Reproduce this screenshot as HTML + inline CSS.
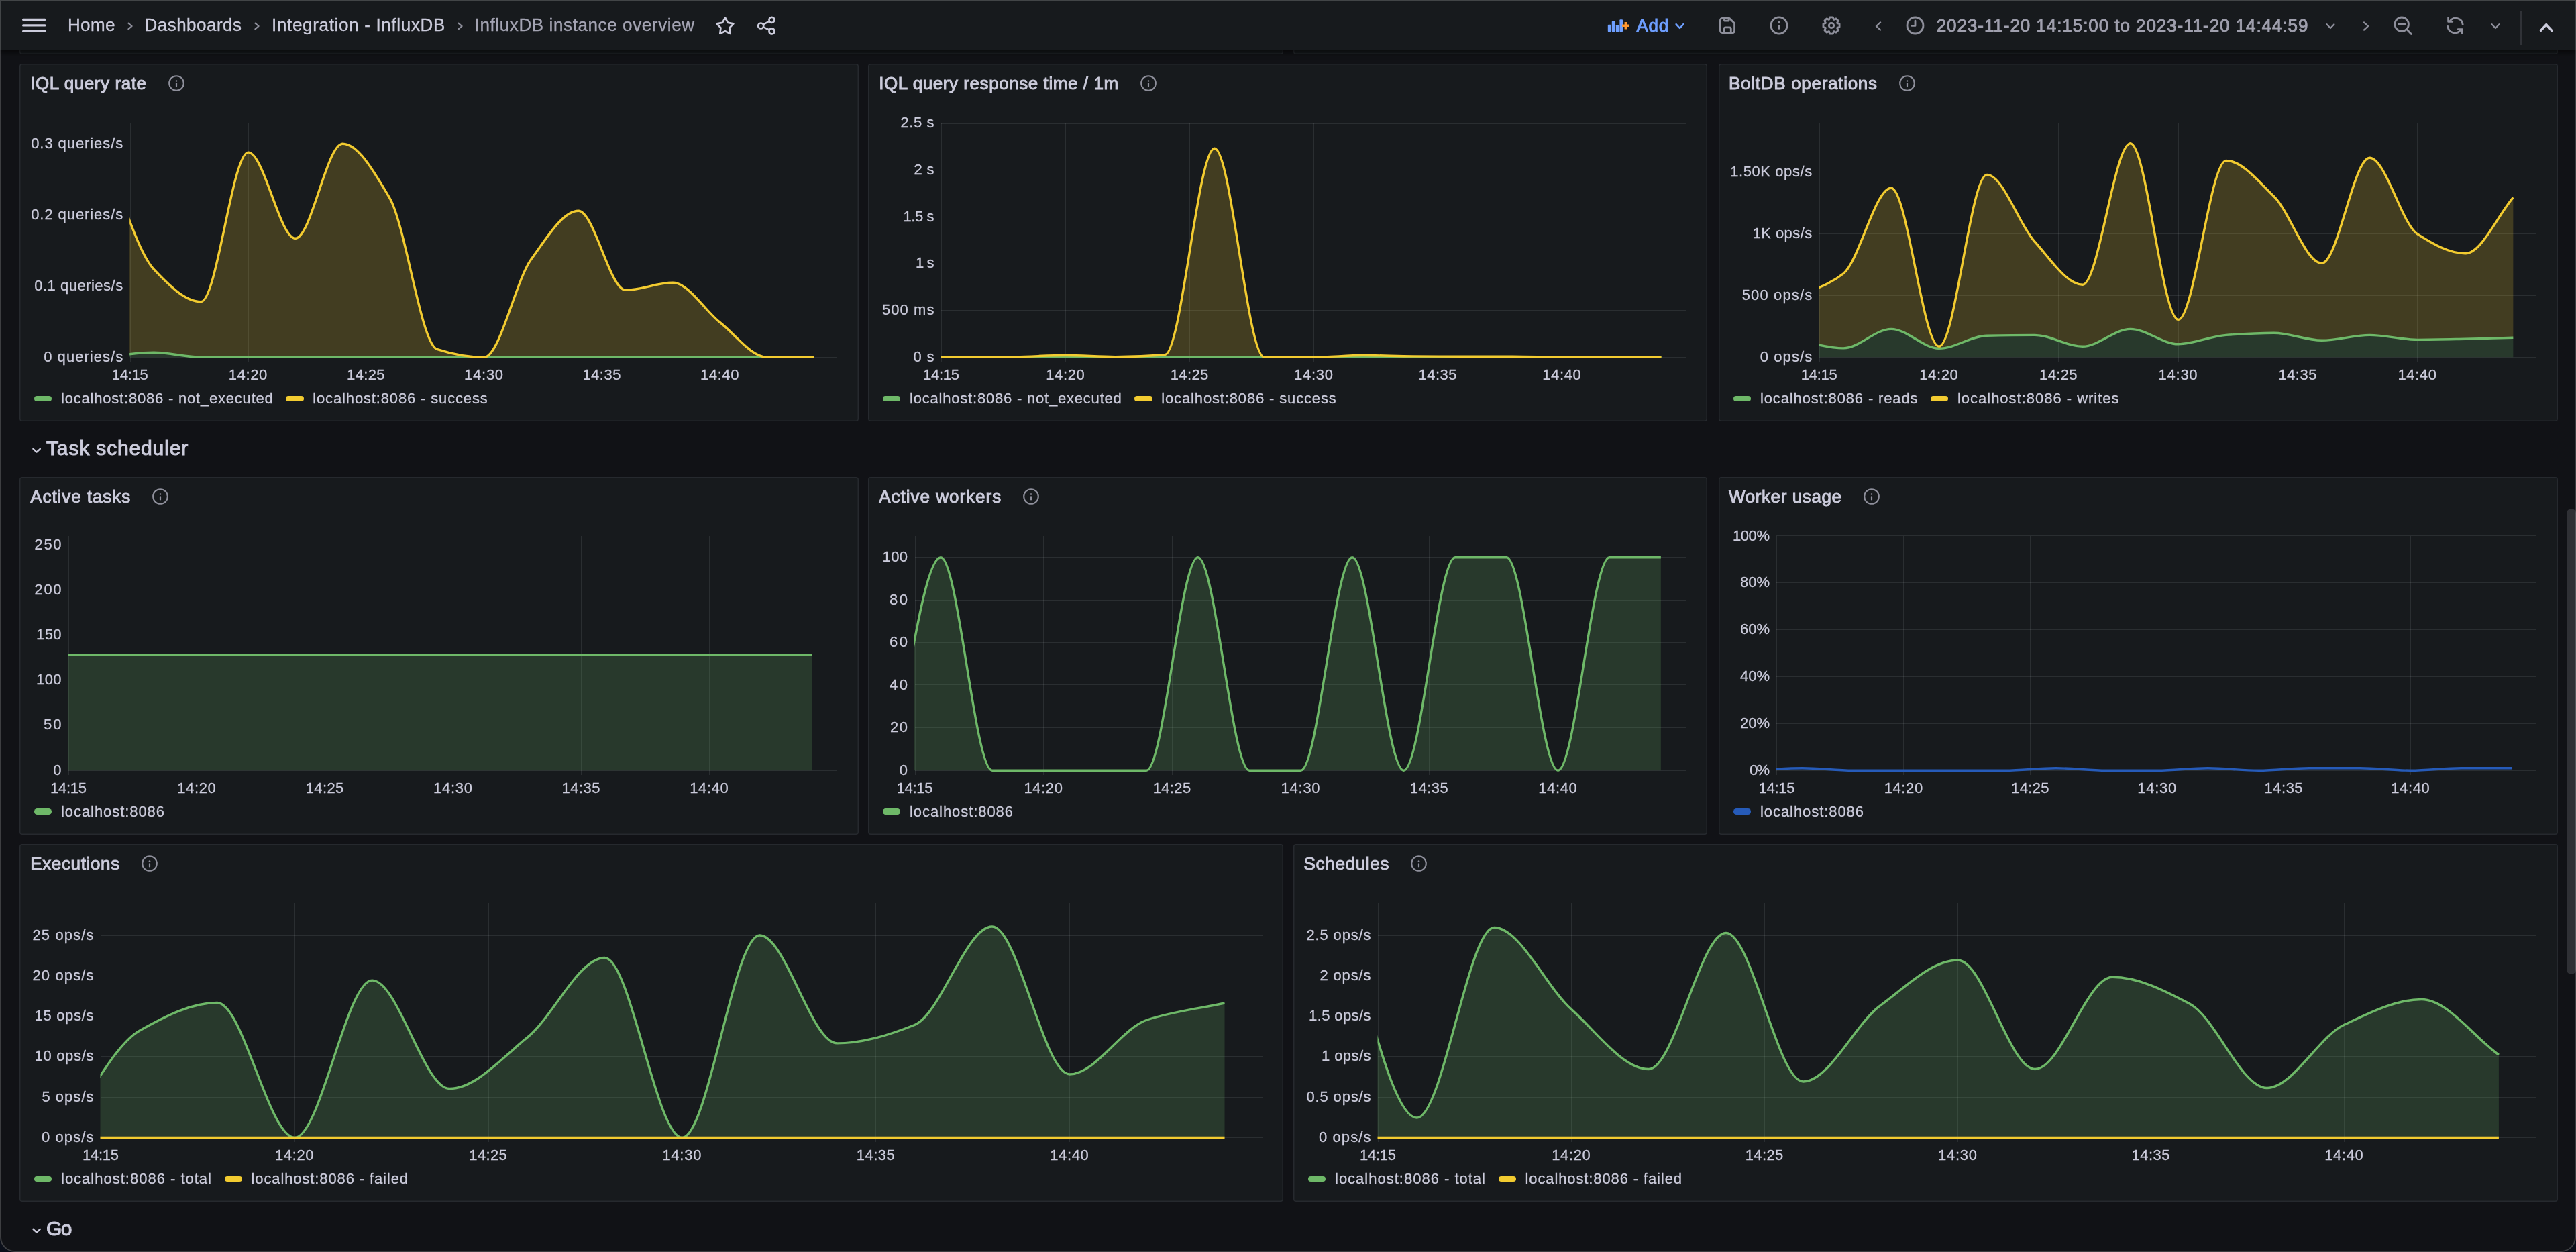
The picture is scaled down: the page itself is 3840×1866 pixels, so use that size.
<!DOCTYPE html><html><head><meta charset='utf-8'><title>InfluxDB instance overview - Dashboards - Grafana</title><style>
*{box-sizing:border-box}
html,body{margin:0;padding:0;background:#111216;}
body{width:3840px;height:1866px;overflow:hidden;position:relative;font-family:'Liberation Sans', sans-serif;color:#ccccdc}
.panel{position:absolute;background:#171a1d;box-shadow:inset 0 0 0 1.5px #26292e;border-radius:4px;overflow:hidden}
.panel>*{position:absolute}
.chart{left:0;top:0}
.ptitle{font-size:26px;line-height:32px;white-space:pre;color:#ccccdc;-webkit-text-stroke:0.95px #ccccdc}
.ic{position:absolute}
.tk{font-family:'Liberation Sans', sans-serif;font-size:22px;fill:#ccccdc;stroke:#ccccdc;stroke-width:0.3px}
.tx{letter-spacing:-0.4px}
.lgm{width:26.3px;height:8.6px;border-radius:4.3px}
.lgt{font-size:22px;line-height:26px;white-space:pre;color:#ccccdc;-webkit-text-stroke:0.3px #ccccdc}
.row{position:absolute;font-size:30px;line-height:36px;white-space:pre;color:#ccccdc;-webkit-text-stroke:1.05px #ccccdc}
.abs{position:absolute}
#root{position:absolute;left:0;top:0;width:3840px;height:1866px;overflow:hidden;will-change:transform}
</style></head><body><div id='root'>
<div class="panel" style="left:29px;top:20px;width:1884px;height:60.6px"></div>
<div class="panel" style="left:1928px;top:20px;width:1885px;height:60.6px"></div>
<div class="panel" style="left:29px;top:95.2px;width:1251px;height:532.8px">
<div class="ptitle" style="left:16.2px;top:12.8px;letter-spacing:0.582px">IQL query rate</div>
<svg class="ic" style="left:220.6px;top:16.3px" width="26" height="26" viewBox="0 0 26 26"><circle cx="13" cy="13" r="10.8" fill="none" stroke="#8e8f9b" stroke-width="2.1"/><circle cx="13" cy="9.5" r="1.35" fill="#8e8f9b"/><rect x="11.9" y="12.3" width="2.2" height="6.2" rx="1.1" fill="#8e8f9b"/></svg>
<svg class="chart" width="1251" height="532.8" viewBox="0 0 1251 532.8"><defs><clipPath id="cp0"><rect x="164.2" y="84.3" width="1057.3" height="355.5"/></clipPath></defs><path d="M165.50,88.3V443.8M341.50,88.3V443.8M516.50,88.3V443.8M692.50,88.3V443.8M868.50,88.3V443.8M1044.50,88.3V443.8M165.0,119.30H1219.5M165.0,225.30H1219.5M165.0,331.30H1219.5M165.0,437.30H1219.5" stroke="rgba(240,250,255,0.09)" stroke-width="1" fill="none" shape-rendering="crispEdges"/><g clip-path="url(#cp0)"><path d="M130.04,436.24C153.48,434.26 176.92,430.30 200.36,430.30C223.80,430.30 247.24,437.30 270.68,437.30C294.12,437.30 317.56,437.30 341.00,437.30C364.44,437.30 387.88,437.30 411.32,437.30C434.76,437.30 458.20,437.30 481.64,437.30C505.08,437.30 528.52,437.30 551.96,437.30C575.40,437.30 598.84,437.30 622.28,437.30C645.72,437.30 669.16,437.30 692.60,437.30C716.04,437.30 739.48,437.30 762.92,437.30C786.36,437.30 809.80,437.30 833.24,437.30C856.68,437.30 880.12,437.30 903.56,437.30C927.00,437.30 950.44,437.30 973.88,437.30C997.32,437.30 1020.76,437.30 1044.20,437.30C1067.64,437.30 1091.08,437.30 1114.52,437.30C1137.96,437.30 1161.40,437.30 1184.84,437.30L1184.84,437.30L130.04,437.30Z" fill="#6eb868" fill-opacity="0.2"/><path d="M130.04,145.80C153.48,199.33 176.92,281.66 200.36,306.39C223.80,331.12 247.24,354.62 270.68,354.62C294.12,354.62 317.56,132.13 341.00,132.13C364.44,132.13 387.88,260.28 411.32,260.28C434.76,260.28 458.20,119.30 481.64,119.30C505.08,119.30 528.52,160.58 551.96,200.28C575.40,239.99 598.84,417.74 622.28,425.32C645.72,432.90 669.16,437.30 692.60,437.30C716.04,437.30 739.48,323.51 762.92,291.34C786.36,259.17 809.80,219.26 833.24,219.26C856.68,219.26 880.12,337.34 903.56,337.34C927.00,337.34 950.44,326.32 973.88,326.32C997.32,326.32 1020.76,366.94 1044.20,385.36C1067.64,403.78 1091.08,437.30 1114.52,437.30C1137.96,437.30 1161.40,437.30 1184.84,437.30L1184.84,437.30C1161.40,437.30 1137.96,437.30 1114.52,437.30C1091.08,437.30 1067.64,437.30 1044.20,437.30C1020.76,437.30 997.32,437.30 973.88,437.30C950.44,437.30 927.00,437.30 903.56,437.30C880.12,437.30 856.68,437.30 833.24,437.30C809.80,437.30 786.36,437.30 762.92,437.30C739.48,437.30 716.04,437.30 692.60,437.30C669.16,437.30 645.72,437.30 622.28,437.30C598.84,437.30 575.40,437.30 551.96,437.30C528.52,437.30 505.08,437.30 481.64,437.30C458.20,437.30 434.76,437.30 411.32,437.30C387.88,437.30 364.44,437.30 341.00,437.30C317.56,437.30 294.12,437.30 270.68,437.30C247.24,437.30 223.80,430.30 200.36,430.30C176.92,430.30 153.48,434.26 130.04,436.24Z" fill="#f2cb30" fill-opacity="0.2"/><path d="M130.04,436.24C153.48,434.26 176.92,430.30 200.36,430.30C223.80,430.30 247.24,437.30 270.68,437.30C294.12,437.30 317.56,437.30 341.00,437.30C364.44,437.30 387.88,437.30 411.32,437.30C434.76,437.30 458.20,437.30 481.64,437.30C505.08,437.30 528.52,437.30 551.96,437.30C575.40,437.30 598.84,437.30 622.28,437.30C645.72,437.30 669.16,437.30 692.60,437.30C716.04,437.30 739.48,437.30 762.92,437.30C786.36,437.30 809.80,437.30 833.24,437.30C856.68,437.30 880.12,437.30 903.56,437.30C927.00,437.30 950.44,437.30 973.88,437.30C997.32,437.30 1020.76,437.30 1044.20,437.30C1067.64,437.30 1091.08,437.30 1114.52,437.30C1137.96,437.30 1161.40,437.30 1184.84,437.30" fill="none" stroke="#6eb868" stroke-width="3.4" stroke-linejoin="round"/><path d="M130.04,145.80C153.48,199.33 176.92,281.66 200.36,306.39C223.80,331.12 247.24,354.62 270.68,354.62C294.12,354.62 317.56,132.13 341.00,132.13C364.44,132.13 387.88,260.28 411.32,260.28C434.76,260.28 458.20,119.30 481.64,119.30C505.08,119.30 528.52,160.58 551.96,200.28C575.40,239.99 598.84,417.74 622.28,425.32C645.72,432.90 669.16,437.30 692.60,437.30C716.04,437.30 739.48,323.51 762.92,291.34C786.36,259.17 809.80,219.26 833.24,219.26C856.68,219.26 880.12,337.34 903.56,337.34C927.00,337.34 950.44,326.32 973.88,326.32C997.32,326.32 1020.76,366.94 1044.20,385.36C1067.64,403.78 1091.08,437.30 1114.52,437.30C1137.96,437.30 1161.40,437.30 1184.84,437.30" fill="none" stroke="#f2cb30" stroke-width="3.4" stroke-linejoin="round"/></g><text class="tk" x="154.2" y="125.7" text-anchor="end" textLength="137" lengthAdjust="spacing">0.3 queries/s</text><text class="tk" x="154.2" y="231.7" text-anchor="end" textLength="137" lengthAdjust="spacing">0.2 queries/s</text><text class="tk" x="154.2" y="337.7" text-anchor="end" textLength="132" lengthAdjust="spacing">0.1 queries/s</text><text class="tk" x="154.2" y="443.7" text-anchor="end" textLength="118" lengthAdjust="spacing">0 queries/s</text><text class="tk" x="164.7" y="471.3" text-anchor="middle" textLength="54" lengthAdjust="spacing">14:15</text><text class="tk" x="340.5" y="471.3" text-anchor="middle" textLength="57.5" lengthAdjust="spacing">14:20</text><text class="tk" x="516.3" y="471.3" text-anchor="middle" textLength="56.5" lengthAdjust="spacing">14:25</text><text class="tk" x="692.1" y="471.3" text-anchor="middle" textLength="58" lengthAdjust="spacing">14:30</text><text class="tk" x="867.9" y="471.3" text-anchor="middle" textLength="57" lengthAdjust="spacing">14:35</text><text class="tk" x="1043.7" y="471.3" text-anchor="middle" textLength="57.5" lengthAdjust="spacing">14:40</text></svg>
<div class="lgm" style="left:22px;top:494.6px;background:#6eb868"></div>
<div class="lgt" style="left:62px;top:485.9px;letter-spacing:0.795px">localhost:8086 - not_executed</div>
<div class="lgm" style="left:397.3px;top:494.6px;background:#f2cb30"></div>
<div class="lgt" style="left:437.3px;top:485.9px;letter-spacing:0.852px">localhost:8086 - success</div>
</div>
<div class="panel" style="left:1294px;top:95.2px;width:1251.3000000000002px;height:532.8px">
<div class="ptitle" style="left:16.2px;top:12.8px;letter-spacing:0.569px">IQL query response time / 1m</div>
<svg class="ic" style="left:404.7px;top:16.3px" width="26" height="26" viewBox="0 0 26 26"><circle cx="13" cy="13" r="10.8" fill="none" stroke="#8e8f9b" stroke-width="2.1"/><circle cx="13" cy="9.5" r="1.35" fill="#8e8f9b"/><rect x="11.9" y="12.3" width="2.2" height="6.2" rx="1.1" fill="#8e8f9b"/></svg>
<svg class="chart" width="1251.3000000000002" height="532.8" viewBox="0 0 1251.3000000000002 532.8"><defs><clipPath id="cp1"><rect x="108.5" y="84.3" width="1113.0" height="355.5"/></clipPath></defs><path d="M109.50,88.3V443.8M294.50,88.3V443.8M479.50,88.3V443.8M664.50,88.3V443.8M849.50,88.3V443.8M1034.50,88.3V443.8M109.0,89.30H1219.5M109.0,158.30H1219.5M109.0,228.30H1219.5M109.0,298.30H1219.5M109.0,367.30H1219.5M109.0,437.30H1219.5" stroke="rgba(240,250,255,0.09)" stroke-width="1" fill="none" shape-rendering="crispEdges"/><g clip-path="url(#cp1)"><path d="M72.50,437.30C97.17,437.30 121.83,437.30 146.50,437.30C171.17,437.30 195.83,437.30 220.50,437.30C245.17,437.30 269.83,437.30 294.50,437.30C319.17,437.30 343.83,437.30 368.50,437.30C393.17,437.30 417.83,437.30 442.50,437.30C467.17,437.30 491.83,437.30 516.50,437.30C541.17,437.30 565.83,437.30 590.50,437.30C615.17,437.30 639.83,437.30 664.50,437.30C689.17,437.30 713.83,437.30 738.50,437.30C763.17,437.30 787.83,437.30 812.50,437.30C837.17,437.30 861.83,437.30 886.50,437.30C911.17,437.30 935.83,437.30 960.50,437.30C985.17,437.30 1009.83,437.30 1034.50,437.30C1059.17,437.30 1083.83,437.30 1108.50,437.30C1133.17,437.30 1157.83,437.30 1182.50,437.30L1182.50,437.30L72.50,437.30Z" fill="#6eb868" fill-opacity="0.2"/><path d="M72.50,437.30C97.17,437.30 121.83,437.30 146.50,437.30C171.17,437.30 195.83,436.95 220.50,436.60C245.17,436.25 269.83,434.51 294.50,434.51C319.17,434.51 343.83,436.60 368.50,436.60C393.17,436.60 417.83,435.66 442.50,433.81C467.17,431.97 491.83,126.30 516.50,126.30C541.17,126.30 565.83,437.30 590.50,437.30C615.17,437.30 639.83,437.30 664.50,437.30C689.17,437.30 713.83,434.51 738.50,434.51C763.17,434.51 787.83,435.75 812.50,435.91C837.17,436.06 861.83,436.18 886.50,436.18C911.17,436.18 935.83,436.18 960.50,436.18C985.17,436.18 1009.83,437.30 1034.50,437.30C1059.17,437.30 1083.83,437.30 1108.50,437.30C1133.17,437.30 1157.83,437.30 1182.50,437.30L1182.50,437.30C1157.83,437.30 1133.17,437.30 1108.50,437.30C1083.83,437.30 1059.17,437.30 1034.50,437.30C1009.83,437.30 985.17,437.30 960.50,437.30C935.83,437.30 911.17,437.30 886.50,437.30C861.83,437.30 837.17,437.30 812.50,437.30C787.83,437.30 763.17,437.30 738.50,437.30C713.83,437.30 689.17,437.30 664.50,437.30C639.83,437.30 615.17,437.30 590.50,437.30C565.83,437.30 541.17,437.30 516.50,437.30C491.83,437.30 467.17,437.30 442.50,437.30C417.83,437.30 393.17,437.30 368.50,437.30C343.83,437.30 319.17,437.30 294.50,437.30C269.83,437.30 245.17,437.30 220.50,437.30C195.83,437.30 171.17,437.30 146.50,437.30C121.83,437.30 97.17,437.30 72.50,437.30Z" fill="#f2cb30" fill-opacity="0.2"/><path d="M72.50,437.30C97.17,437.30 121.83,437.30 146.50,437.30C171.17,437.30 195.83,437.30 220.50,437.30C245.17,437.30 269.83,437.30 294.50,437.30C319.17,437.30 343.83,437.30 368.50,437.30C393.17,437.30 417.83,437.30 442.50,437.30C467.17,437.30 491.83,437.30 516.50,437.30C541.17,437.30 565.83,437.30 590.50,437.30C615.17,437.30 639.83,437.30 664.50,437.30C689.17,437.30 713.83,437.30 738.50,437.30C763.17,437.30 787.83,437.30 812.50,437.30C837.17,437.30 861.83,437.30 886.50,437.30C911.17,437.30 935.83,437.30 960.50,437.30C985.17,437.30 1009.83,437.30 1034.50,437.30C1059.17,437.30 1083.83,437.30 1108.50,437.30C1133.17,437.30 1157.83,437.30 1182.50,437.30" fill="none" stroke="#6eb868" stroke-width="3.4" stroke-linejoin="round"/><path d="M72.50,437.30C97.17,437.30 121.83,437.30 146.50,437.30C171.17,437.30 195.83,436.95 220.50,436.60C245.17,436.25 269.83,434.51 294.50,434.51C319.17,434.51 343.83,436.60 368.50,436.60C393.17,436.60 417.83,435.66 442.50,433.81C467.17,431.97 491.83,126.30 516.50,126.30C541.17,126.30 565.83,437.30 590.50,437.30C615.17,437.30 639.83,437.30 664.50,437.30C689.17,437.30 713.83,434.51 738.50,434.51C763.17,434.51 787.83,435.75 812.50,435.91C837.17,436.06 861.83,436.18 886.50,436.18C911.17,436.18 935.83,436.18 960.50,436.18C985.17,436.18 1009.83,437.30 1034.50,437.30C1059.17,437.30 1083.83,437.30 1108.50,437.30C1133.17,437.30 1157.83,437.30 1182.50,437.30" fill="none" stroke="#f2cb30" stroke-width="3.4" stroke-linejoin="round"/></g><text class="tk" x="98.5" y="95.2" text-anchor="end" textLength="50" lengthAdjust="spacing">2.5 s</text><text class="tk" x="98.5" y="164.9" text-anchor="end" textLength="30" lengthAdjust="spacing">2 s</text><text class="tk" x="98.5" y="234.6" text-anchor="end" textLength="46" lengthAdjust="spacing">1.5 s</text><text class="tk" x="98.5" y="304.3" text-anchor="end" textLength="27.5" lengthAdjust="spacing">1 s</text><text class="tk" x="98.5" y="374.0" text-anchor="end" textLength="77.5" lengthAdjust="spacing">500 ms</text><text class="tk" x="98.5" y="443.7" text-anchor="end" textLength="31" lengthAdjust="spacing">0 s</text><text class="tk" x="109.0" y="471.3" text-anchor="middle" textLength="54" lengthAdjust="spacing">14:15</text><text class="tk" x="294.0" y="471.3" text-anchor="middle" textLength="57.5" lengthAdjust="spacing">14:20</text><text class="tk" x="479.0" y="471.3" text-anchor="middle" textLength="56.5" lengthAdjust="spacing">14:25</text><text class="tk" x="664.0" y="471.3" text-anchor="middle" textLength="58" lengthAdjust="spacing">14:30</text><text class="tk" x="849.0" y="471.3" text-anchor="middle" textLength="57" lengthAdjust="spacing">14:35</text><text class="tk" x="1034.0" y="471.3" text-anchor="middle" textLength="57.5" lengthAdjust="spacing">14:40</text></svg>
<div class="lgm" style="left:22px;top:494.6px;background:#6eb868"></div>
<div class="lgt" style="left:62px;top:485.9px;letter-spacing:0.795px">localhost:8086 - not_executed</div>
<div class="lgm" style="left:397.3px;top:494.6px;background:#f2cb30"></div>
<div class="lgt" style="left:437.3px;top:485.9px;letter-spacing:0.852px">localhost:8086 - success</div>
</div>
<div class="panel" style="left:2562px;top:95.2px;width:1251px;height:532.8px">
<div class="ptitle" style="left:15.0px;top:12.8px;letter-spacing:0.715px">BoltDB operations</div>
<svg class="ic" style="left:267.6px;top:16.3px" width="26" height="26" viewBox="0 0 26 26"><circle cx="13" cy="13" r="10.8" fill="none" stroke="#8e8f9b" stroke-width="2.1"/><circle cx="13" cy="9.5" r="1.35" fill="#8e8f9b"/><rect x="11.9" y="12.3" width="2.2" height="6.2" rx="1.1" fill="#8e8f9b"/></svg>
<svg class="chart" width="1251" height="532.8" viewBox="0 0 1251 532.8"><defs><clipPath id="cp2"><rect x="149.2" y="84.3" width="1071.8" height="355.5"/></clipPath></defs><path d="M150.50,88.3V443.8M328.50,88.3V443.8M506.50,88.3V443.8M685.50,88.3V443.8M863.50,88.3V443.8M1041.50,88.3V443.8M150.0,161.30H1219.0M150.0,253.30H1219.0M150.0,345.30H1219.0M150.0,437.30H1219.0" stroke="rgba(240,250,255,0.09)" stroke-width="1" fill="none" shape-rendering="crispEdges"/><g clip-path="url(#cp2)"><path d="M114.54,411.54C138.31,415.65 162.09,423.87 185.86,423.87C209.63,423.87 233.41,395.35 257.18,395.35C280.95,395.35 304.73,424.24 328.50,424.24C352.27,424.24 376.05,405.87 399.82,405.28C423.59,404.70 447.37,404.36 471.14,404.36C494.91,404.36 518.69,421.29 542.46,421.29C566.23,421.29 590.01,395.35 613.78,395.35C637.55,395.35 661.33,417.80 685.10,417.80C708.87,417.80 732.65,406.06 756.42,404.36C780.19,402.67 803.97,401.24 827.74,401.24C851.51,401.24 875.29,412.28 899.06,412.28C922.83,412.28 946.61,404.36 970.38,404.36C994.15,404.36 1017.93,411.36 1041.70,411.36C1065.47,411.36 1089.25,410.73 1113.02,410.25C1136.79,409.78 1160.57,408.90 1184.34,408.23L1184.34,437.30L114.54,437.30Z" fill="#6eb868" fill-opacity="0.2"/><path d="M114.54,348.98C138.31,336.90 162.09,331.55 185.86,312.73C209.63,293.92 233.41,185.22 257.18,185.22C280.95,185.22 304.73,421.29 328.50,421.29C352.27,421.29 376.05,165.35 399.82,165.35C423.59,165.35 447.37,239.24 471.14,265.26C494.91,291.28 518.69,329.29 542.46,329.29C566.23,329.29 590.01,118.80 613.78,118.80C637.55,118.80 661.33,381.36 685.10,381.36C708.87,381.36 732.65,144.37 756.42,144.37C780.19,144.37 803.97,174.57 827.74,197.73C851.51,220.89 875.29,297.28 899.06,297.28C922.83,297.28 946.61,140.32 970.38,140.32C994.15,140.32 1017.93,238.50 1041.70,253.85C1065.47,269.20 1089.25,282.74 1113.02,282.74C1136.79,282.74 1160.57,227.17 1184.34,199.39L1184.34,408.23C1160.57,408.90 1136.79,409.78 1113.02,410.25C1089.25,410.73 1065.47,411.36 1041.70,411.36C1017.93,411.36 994.15,404.36 970.38,404.36C946.61,404.36 922.83,412.28 899.06,412.28C875.29,412.28 851.51,401.24 827.74,401.24C803.97,401.24 780.19,402.67 756.42,404.36C732.65,406.06 708.87,417.80 685.10,417.80C661.33,417.80 637.55,395.35 613.78,395.35C590.01,395.35 566.23,421.29 542.46,421.29C518.69,421.29 494.91,404.36 471.14,404.36C447.37,404.36 423.59,404.70 399.82,405.28C376.05,405.87 352.27,424.24 328.50,424.24C304.73,424.24 280.95,395.35 257.18,395.35C233.41,395.35 209.63,423.87 185.86,423.87C162.09,423.87 138.31,415.65 114.54,411.54Z" fill="#f2cb30" fill-opacity="0.2"/><path d="M114.54,411.54C138.31,415.65 162.09,423.87 185.86,423.87C209.63,423.87 233.41,395.35 257.18,395.35C280.95,395.35 304.73,424.24 328.50,424.24C352.27,424.24 376.05,405.87 399.82,405.28C423.59,404.70 447.37,404.36 471.14,404.36C494.91,404.36 518.69,421.29 542.46,421.29C566.23,421.29 590.01,395.35 613.78,395.35C637.55,395.35 661.33,417.80 685.10,417.80C708.87,417.80 732.65,406.06 756.42,404.36C780.19,402.67 803.97,401.24 827.74,401.24C851.51,401.24 875.29,412.28 899.06,412.28C922.83,412.28 946.61,404.36 970.38,404.36C994.15,404.36 1017.93,411.36 1041.70,411.36C1065.47,411.36 1089.25,410.73 1113.02,410.25C1136.79,409.78 1160.57,408.90 1184.34,408.23" fill="none" stroke="#6eb868" stroke-width="3.4" stroke-linejoin="round"/><path d="M114.54,348.98C138.31,336.90 162.09,331.55 185.86,312.73C209.63,293.92 233.41,185.22 257.18,185.22C280.95,185.22 304.73,421.29 328.50,421.29C352.27,421.29 376.05,165.35 399.82,165.35C423.59,165.35 447.37,239.24 471.14,265.26C494.91,291.28 518.69,329.29 542.46,329.29C566.23,329.29 590.01,118.80 613.78,118.80C637.55,118.80 661.33,381.36 685.10,381.36C708.87,381.36 732.65,144.37 756.42,144.37C780.19,144.37 803.97,174.57 827.74,197.73C851.51,220.89 875.29,297.28 899.06,297.28C922.83,297.28 946.61,140.32 970.38,140.32C994.15,140.32 1017.93,238.50 1041.70,253.85C1065.47,269.20 1089.25,282.74 1113.02,282.74C1136.79,282.74 1160.57,227.17 1184.34,199.39" fill="none" stroke="#f2cb30" stroke-width="3.4" stroke-linejoin="round"/></g><text class="tk" x="139.2" y="167.7" text-anchor="end" textLength="122" lengthAdjust="spacing">1.50K ops/s</text><text class="tk" x="139.2" y="259.7" text-anchor="end" textLength="88.5" lengthAdjust="spacing">1K ops/s</text><text class="tk" x="139.2" y="351.7" text-anchor="end" textLength="104.5" lengthAdjust="spacing">500 ops/s</text><text class="tk" x="139.2" y="443.7" text-anchor="end" textLength="77.5" lengthAdjust="spacing">0 ops/s</text><text class="tk" x="149.7" y="471.3" text-anchor="middle" textLength="54" lengthAdjust="spacing">14:15</text><text class="tk" x="328.0" y="471.3" text-anchor="middle" textLength="57.5" lengthAdjust="spacing">14:20</text><text class="tk" x="506.3" y="471.3" text-anchor="middle" textLength="56.5" lengthAdjust="spacing">14:25</text><text class="tk" x="684.6" y="471.3" text-anchor="middle" textLength="58" lengthAdjust="spacing">14:30</text><text class="tk" x="862.9" y="471.3" text-anchor="middle" textLength="57" lengthAdjust="spacing">14:35</text><text class="tk" x="1041.2" y="471.3" text-anchor="middle" textLength="57.5" lengthAdjust="spacing">14:40</text></svg>
<div class="lgm" style="left:22px;top:494.6px;background:#6eb868"></div>
<div class="lgt" style="left:62px;top:485.9px;letter-spacing:0.859px">localhost:8086 - reads</div>
<div class="lgm" style="left:316.0px;top:494.6px;background:#f2cb30"></div>
<div class="lgt" style="left:356.0px;top:485.9px;letter-spacing:0.982px">localhost:8086 - writes</div>
</div>
<div class="panel" style="left:29px;top:710.8px;width:1251px;height:532.8px">
<div class="ptitle" style="left:16.2px;top:12.8px;letter-spacing:0.935px">Active tasks</div>
<svg class="ic" style="left:196.8px;top:16.3px" width="26" height="26" viewBox="0 0 26 26"><circle cx="13" cy="13" r="10.8" fill="none" stroke="#8e8f9b" stroke-width="2.1"/><circle cx="13" cy="9.5" r="1.35" fill="#8e8f9b"/><rect x="11.9" y="12.3" width="2.2" height="6.2" rx="1.1" fill="#8e8f9b"/></svg>
<svg class="chart" width="1251" height="532.8" viewBox="0 0 1251 532.8"><defs><clipPath id="cp3"><rect x="72.5" y="83.7" width="1149.0" height="356.0"/></clipPath></defs><path d="M73.50,87.7V443.7M264.50,87.7V443.7M455.50,87.7V443.7M646.50,87.7V443.7M837.50,87.7V443.7M1028.50,87.7V443.7M73.0,101.70H1219.5M73.0,168.70H1219.5M73.0,235.70H1219.5M73.0,302.70H1219.5M73.0,369.70H1219.5M73.0,437.70H1219.5" stroke="rgba(240,250,255,0.09)" stroke-width="1" fill="none" shape-rendering="crispEdges"/><g clip-path="url(#cp3)"><path d="M35.30,265.17C60.77,265.17 86.23,265.17 111.70,265.17C137.17,265.17 162.63,265.17 188.10,265.17C213.57,265.17 239.03,265.17 264.50,265.17C289.97,265.17 315.43,265.17 340.90,265.17C366.37,265.17 391.83,265.17 417.30,265.17C442.77,265.17 468.23,265.17 493.70,265.17C519.17,265.17 544.63,265.17 570.10,265.17C595.57,265.17 621.03,265.17 646.50,265.17C671.97,265.17 697.43,265.17 722.90,265.17C748.37,265.17 773.83,265.17 799.30,265.17C824.77,265.17 850.23,265.17 875.70,265.17C901.17,265.17 926.63,265.17 952.10,265.17C977.57,265.17 1003.03,265.17 1028.50,265.17C1053.97,265.17 1079.43,265.17 1104.90,265.17C1130.37,265.17 1155.83,265.17 1181.30,265.17L1181.30,437.20L35.30,437.20Z" fill="#6eb868" fill-opacity="0.2"/><path d="M35.30,265.17C60.77,265.17 86.23,265.17 111.70,265.17C137.17,265.17 162.63,265.17 188.10,265.17C213.57,265.17 239.03,265.17 264.50,265.17C289.97,265.17 315.43,265.17 340.90,265.17C366.37,265.17 391.83,265.17 417.30,265.17C442.77,265.17 468.23,265.17 493.70,265.17C519.17,265.17 544.63,265.17 570.10,265.17C595.57,265.17 621.03,265.17 646.50,265.17C671.97,265.17 697.43,265.17 722.90,265.17C748.37,265.17 773.83,265.17 799.30,265.17C824.77,265.17 850.23,265.17 875.70,265.17C901.17,265.17 926.63,265.17 952.10,265.17C977.57,265.17 1003.03,265.17 1028.50,265.17C1053.97,265.17 1079.43,265.17 1104.90,265.17C1130.37,265.17 1155.83,265.17 1181.30,265.17" fill="none" stroke="#6eb868" stroke-width="3.4" stroke-linejoin="round"/></g><text class="tk" x="62.5" y="107.6" text-anchor="end" textLength="40" lengthAdjust="spacing">250</text><text class="tk" x="62.5" y="174.8" text-anchor="end" textLength="40" lengthAdjust="spacing">200</text><text class="tk" x="62.5" y="242.0" text-anchor="end" textLength="37.5" lengthAdjust="spacing">150</text><text class="tk" x="62.5" y="309.2" text-anchor="end" textLength="37.5" lengthAdjust="spacing">100</text><text class="tk" x="62.5" y="376.4" text-anchor="end" textLength="26.5" lengthAdjust="spacing">50</text><text class="tk" x="62.5" y="443.6" text-anchor="end" textLength="13.5" lengthAdjust="spacing">0</text><text class="tk" x="73.0" y="471.2" text-anchor="middle" textLength="54" lengthAdjust="spacing">14:15</text><text class="tk" x="264.0" y="471.2" text-anchor="middle" textLength="57.5" lengthAdjust="spacing">14:20</text><text class="tk" x="455.0" y="471.2" text-anchor="middle" textLength="56.5" lengthAdjust="spacing">14:25</text><text class="tk" x="646.0" y="471.2" text-anchor="middle" textLength="58" lengthAdjust="spacing">14:30</text><text class="tk" x="837.0" y="471.2" text-anchor="middle" textLength="57" lengthAdjust="spacing">14:35</text><text class="tk" x="1028.0" y="471.2" text-anchor="middle" textLength="57.5" lengthAdjust="spacing">14:40</text></svg>
<div class="lgm" style="left:22px;top:494.6px;background:#6eb868"></div>
<div class="lgt" style="left:62px;top:485.9px;letter-spacing:0.931px">localhost:8086</div>
</div>
<div class="panel" style="left:1294px;top:710.8px;width:1251.3000000000002px;height:532.8px">
<div class="ptitle" style="left:16.2px;top:12.8px;letter-spacing:0.996px">Active workers</div>
<svg class="ic" style="left:229.8px;top:16.3px" width="26" height="26" viewBox="0 0 26 26"><circle cx="13" cy="13" r="10.8" fill="none" stroke="#8e8f9b" stroke-width="2.1"/><circle cx="13" cy="9.5" r="1.35" fill="#8e8f9b"/><rect x="11.9" y="12.3" width="2.2" height="6.2" rx="1.1" fill="#8e8f9b"/></svg>
<svg class="chart" width="1251.3000000000002" height="532.8" viewBox="0 0 1251.3000000000002 532.8"><defs><clipPath id="cp4"><rect x="69.0" y="83.7" width="1152.5" height="356.0"/></clipPath></defs><path d="M70.50,87.7V443.7M261.50,87.7V443.7M453.50,87.7V443.7M645.50,87.7V443.7M836.50,87.7V443.7M1028.50,87.7V443.7M70.0,119.70H1219.5M70.0,183.70H1219.5M70.0,246.70H1219.5M70.0,309.70H1219.5M70.0,373.70H1219.5M70.0,437.70H1219.5" stroke="rgba(240,250,255,0.09)" stroke-width="1" fill="none" shape-rendering="crispEdges"/><g clip-path="url(#cp4)"><path d="M31.66,437.20C57.22,331.37 82.78,119.70 108.34,119.70C133.90,119.70 159.46,437.20 185.02,437.20C210.58,437.20 236.14,437.20 261.70,437.20C287.26,437.20 312.82,437.20 338.38,437.20C363.94,437.20 389.50,437.20 415.06,437.20C440.62,437.20 466.18,119.70 491.74,119.70C517.30,119.70 542.86,437.20 568.42,437.20C593.98,437.20 619.54,437.20 645.10,437.20C670.66,437.20 696.22,119.70 721.78,119.70C747.34,119.70 772.90,437.20 798.46,437.20C824.02,437.20 849.58,119.70 875.14,119.70C900.70,119.70 926.26,119.70 951.82,119.70C977.38,119.70 1002.94,437.20 1028.50,437.20C1054.06,437.20 1079.62,119.70 1105.18,119.70C1130.74,119.70 1156.30,119.70 1181.86,119.70L1181.86,437.20L31.66,437.20Z" fill="#6eb868" fill-opacity="0.2"/><path d="M31.66,437.20C57.22,331.37 82.78,119.70 108.34,119.70C133.90,119.70 159.46,437.20 185.02,437.20C210.58,437.20 236.14,437.20 261.70,437.20C287.26,437.20 312.82,437.20 338.38,437.20C363.94,437.20 389.50,437.20 415.06,437.20C440.62,437.20 466.18,119.70 491.74,119.70C517.30,119.70 542.86,437.20 568.42,437.20C593.98,437.20 619.54,437.20 645.10,437.20C670.66,437.20 696.22,119.70 721.78,119.70C747.34,119.70 772.90,437.20 798.46,437.20C824.02,437.20 849.58,119.70 875.14,119.70C900.70,119.70 926.26,119.70 951.82,119.70C977.38,119.70 1002.94,437.20 1028.50,437.20C1054.06,437.20 1079.62,119.70 1105.18,119.70C1130.74,119.70 1156.30,119.70 1181.86,119.70" fill="none" stroke="#6eb868" stroke-width="3.4" stroke-linejoin="round"/></g><text class="tk" x="59.0" y="126.1" text-anchor="end" textLength="37.5" lengthAdjust="spacing">100</text><text class="tk" x="59.0" y="189.6" text-anchor="end" textLength="27" lengthAdjust="spacing">80</text><text class="tk" x="59.0" y="253.1" text-anchor="end" textLength="27" lengthAdjust="spacing">60</text><text class="tk" x="59.0" y="316.6" text-anchor="end" textLength="27" lengthAdjust="spacing">40</text><text class="tk" x="59.0" y="380.1" text-anchor="end" textLength="26" lengthAdjust="spacing">20</text><text class="tk" x="59.0" y="443.6" text-anchor="end" textLength="13.5" lengthAdjust="spacing">0</text><text class="tk" x="69.5" y="471.2" text-anchor="middle" textLength="54" lengthAdjust="spacing">14:15</text><text class="tk" x="261.2" y="471.2" text-anchor="middle" textLength="57.5" lengthAdjust="spacing">14:20</text><text class="tk" x="452.9" y="471.2" text-anchor="middle" textLength="56.5" lengthAdjust="spacing">14:25</text><text class="tk" x="644.6" y="471.2" text-anchor="middle" textLength="58" lengthAdjust="spacing">14:30</text><text class="tk" x="836.3" y="471.2" text-anchor="middle" textLength="57" lengthAdjust="spacing">14:35</text><text class="tk" x="1028.0" y="471.2" text-anchor="middle" textLength="57.5" lengthAdjust="spacing">14:40</text></svg>
<div class="lgm" style="left:22px;top:494.6px;background:#6eb868"></div>
<div class="lgt" style="left:62px;top:485.9px;letter-spacing:0.931px">localhost:8086</div>
</div>
<div class="panel" style="left:2562px;top:710.8px;width:1251px;height:532.8px">
<div class="ptitle" style="left:15.0px;top:12.8px;letter-spacing:0.602px">Worker usage</div>
<svg class="ic" style="left:214.6px;top:16.3px" width="26" height="26" viewBox="0 0 26 26"><circle cx="13" cy="13" r="10.8" fill="none" stroke="#8e8f9b" stroke-width="2.1"/><circle cx="13" cy="9.5" r="1.35" fill="#8e8f9b"/><rect x="11.9" y="12.3" width="2.2" height="6.2" rx="1.1" fill="#8e8f9b"/></svg>
<svg class="chart" width="1251" height="532.8" viewBox="0 0 1251 532.8"><defs><clipPath id="cp5"><rect x="86.0" y="83.7" width="1135.0" height="356.0"/></clipPath></defs><path d="M86.50,87.7V443.7M275.50,87.7V443.7M464.50,87.7V443.7M653.50,87.7V443.7M842.50,87.7V443.7M1031.50,87.7V443.7M86.0,87.70H1219.0M86.0,157.70H1219.0M86.0,227.70H1219.0M86.0,297.70H1219.0M86.0,367.70H1219.0M86.0,437.70H1219.0" stroke="rgba(240,250,255,0.09)" stroke-width="1" fill="none" shape-rendering="crispEdges"/><g clip-path="url(#cp5)"><path d="M49.22,437.20C74.41,436.04 99.59,433.71 124.78,433.71C149.97,433.71 175.15,437.20 200.34,437.20C225.53,437.20 250.71,437.20 275.90,437.20C301.09,437.20 326.27,437.20 351.46,437.20C376.65,437.20 401.83,437.20 427.02,437.20C452.21,437.20 477.39,433.71 502.58,433.71C527.77,433.71 552.95,437.20 578.14,437.20C603.33,437.20 628.51,437.20 653.70,437.20C678.89,437.20 704.07,433.71 729.26,433.71C754.45,433.71 779.63,437.20 804.82,437.20C830.01,437.20 855.19,433.71 880.38,433.71C905.57,433.71 930.75,433.71 955.94,433.71C981.13,433.71 1006.31,437.20 1031.50,437.20C1056.69,437.20 1081.87,433.71 1107.06,433.71C1132.25,433.71 1157.43,433.71 1182.62,433.71" fill="none" stroke="#265bb9" stroke-width="3.4" stroke-linejoin="round"/></g><text class="tk" x="76.0" y="94.6" text-anchor="end" textLength="55" lengthAdjust="spacing">100%</text><text class="tk" x="76.0" y="164.4" text-anchor="end" textLength="44" lengthAdjust="spacing">80%</text><text class="tk" x="76.0" y="234.2" text-anchor="end" textLength="44" lengthAdjust="spacing">60%</text><text class="tk" x="76.0" y="304.0" text-anchor="end" textLength="44" lengthAdjust="spacing">40%</text><text class="tk" x="76.0" y="373.8" text-anchor="end" textLength="44" lengthAdjust="spacing">20%</text><text class="tk" x="76.0" y="443.6" text-anchor="end" textLength="30" lengthAdjust="spacing">0%</text><text class="tk" x="86.5" y="471.2" text-anchor="middle" textLength="54" lengthAdjust="spacing">14:15</text><text class="tk" x="275.4" y="471.2" text-anchor="middle" textLength="57.5" lengthAdjust="spacing">14:20</text><text class="tk" x="464.3" y="471.2" text-anchor="middle" textLength="56.5" lengthAdjust="spacing">14:25</text><text class="tk" x="653.2" y="471.2" text-anchor="middle" textLength="58" lengthAdjust="spacing">14:30</text><text class="tk" x="842.1" y="471.2" text-anchor="middle" textLength="57" lengthAdjust="spacing">14:35</text><text class="tk" x="1031.0" y="471.2" text-anchor="middle" textLength="57.5" lengthAdjust="spacing">14:40</text></svg>
<div class="lgm" style="left:22px;top:494.6px;background:#265bb9"></div>
<div class="lgt" style="left:62px;top:485.9px;letter-spacing:0.931px">localhost:8086</div>
</div>
<div class="panel" style="left:29px;top:1258px;width:1884px;height:532.8px">
<div class="ptitle" style="left:16.2px;top:12.8px;letter-spacing:0.646px">Executions</div>
<svg class="ic" style="left:180.8px;top:16.3px" width="26" height="26" viewBox="0 0 26 26"><circle cx="13" cy="13" r="10.8" fill="none" stroke="#8e8f9b" stroke-width="2.1"/><circle cx="13" cy="9.5" r="1.35" fill="#8e8f9b"/><rect x="11.9" y="12.3" width="2.2" height="6.2" rx="1.1" fill="#8e8f9b"/></svg>
<svg class="chart" width="1884" height="532.8" viewBox="0 0 1884 532.8"><defs><clipPath id="cp6"><rect x="120.5" y="84.0" width="1734.5" height="356.0"/></clipPath></defs><path d="M121.50,88.0V444.0M410.50,88.0V444.0M699.50,88.0V444.0M987.50,88.0V444.0M1276.50,88.0V444.0M1565.50,88.0V444.0M121.0,136.50H1853.0M121.0,196.50H1853.0M121.0,256.50H1853.0M121.0,316.50H1853.0M121.0,377.50H1853.0M121.0,437.50H1853.0" stroke="rgba(240,250,255,0.09)" stroke-width="1" fill="none" shape-rendering="crispEdges"/><g clip-path="url(#cp6)"><path d="M63.74,431.49C102.25,380.32 140.75,299.76 179.26,277.99C217.77,256.23 256.27,236.53 294.78,236.53C333.29,236.53 371.79,437.50 410.30,437.50C448.81,437.50 487.31,203.11 525.82,203.11C564.33,203.11 602.83,364.54 641.34,364.54C679.85,364.54 718.35,319.39 756.86,288.45C795.37,257.51 833.87,169.45 872.38,169.45C910.89,169.45 949.39,437.50 987.90,437.50C1026.41,437.50 1064.91,136.04 1103.42,136.04C1141.93,136.04 1180.43,296.87 1218.94,296.87C1257.45,296.87 1295.95,284.85 1334.46,269.46C1372.97,254.07 1411.47,123.06 1449.98,123.06C1488.49,123.06 1526.99,343.02 1565.50,343.02C1604.01,343.02 1642.51,274.75 1681.02,262.01C1719.53,249.27 1758.03,245.34 1796.54,237.01L1796.54,437.50L63.74,437.50Z" fill="#6eb868" fill-opacity="0.2"/><path d="M63.74,431.49C102.25,380.32 140.75,299.76 179.26,277.99C217.77,256.23 256.27,236.53 294.78,236.53C333.29,236.53 371.79,437.50 410.30,437.50C448.81,437.50 487.31,203.11 525.82,203.11C564.33,203.11 602.83,364.54 641.34,364.54C679.85,364.54 718.35,319.39 756.86,288.45C795.37,257.51 833.87,169.45 872.38,169.45C910.89,169.45 949.39,437.50 987.90,437.50C1026.41,437.50 1064.91,136.04 1103.42,136.04C1141.93,136.04 1180.43,296.87 1218.94,296.87C1257.45,296.87 1295.95,284.85 1334.46,269.46C1372.97,254.07 1411.47,123.06 1449.98,123.06C1488.49,123.06 1526.99,343.02 1565.50,343.02C1604.01,343.02 1642.51,274.75 1681.02,262.01C1719.53,249.27 1758.03,245.34 1796.54,237.01" fill="none" stroke="#6eb868" stroke-width="3.4" stroke-linejoin="round"/><path d="M63.74,437.50C102.25,437.50 140.75,437.50 179.26,437.50C217.77,437.50 256.27,437.50 294.78,437.50C333.29,437.50 371.79,437.50 410.30,437.50C448.81,437.50 487.31,437.50 525.82,437.50C564.33,437.50 602.83,437.50 641.34,437.50C679.85,437.50 718.35,437.50 756.86,437.50C795.37,437.50 833.87,437.50 872.38,437.50C910.89,437.50 949.39,437.50 987.90,437.50C1026.41,437.50 1064.91,437.50 1103.42,437.50C1141.93,437.50 1180.43,437.50 1218.94,437.50C1257.45,437.50 1295.95,437.50 1334.46,437.50C1372.97,437.50 1411.47,437.50 1449.98,437.50C1488.49,437.50 1526.99,437.50 1565.50,437.50C1604.01,437.50 1642.51,437.50 1681.02,437.50C1719.53,437.50 1758.03,437.50 1796.54,437.50" fill="none" stroke="#f2cb30" stroke-width="3.4" stroke-linejoin="round"/></g><text class="tk" x="110.5" y="143.4" text-anchor="end" textLength="91" lengthAdjust="spacing">25 ops/s</text><text class="tk" x="110.5" y="203.4" text-anchor="end" textLength="91" lengthAdjust="spacing">20 ops/s</text><text class="tk" x="110.5" y="263.4" text-anchor="end" textLength="88" lengthAdjust="spacing">15 ops/s</text><text class="tk" x="110.5" y="323.4" text-anchor="end" textLength="88" lengthAdjust="spacing">10 ops/s</text><text class="tk" x="110.5" y="383.9" text-anchor="end" textLength="77" lengthAdjust="spacing">5 ops/s</text><text class="tk" x="110.5" y="443.9" text-anchor="end" textLength="77.5" lengthAdjust="spacing">0 ops/s</text><text class="tk" x="121.0" y="471.5" text-anchor="middle" textLength="54" lengthAdjust="spacing">14:15</text><text class="tk" x="409.8" y="471.5" text-anchor="middle" textLength="57.5" lengthAdjust="spacing">14:20</text><text class="tk" x="698.6" y="471.5" text-anchor="middle" textLength="56.5" lengthAdjust="spacing">14:25</text><text class="tk" x="987.4" y="471.5" text-anchor="middle" textLength="58" lengthAdjust="spacing">14:30</text><text class="tk" x="1276.2" y="471.5" text-anchor="middle" textLength="57" lengthAdjust="spacing">14:35</text><text class="tk" x="1565.0" y="471.5" text-anchor="middle" textLength="57.5" lengthAdjust="spacing">14:40</text></svg>
<div class="lgm" style="left:22px;top:494.6px;background:#6eb868"></div>
<div class="lgt" style="left:62px;top:485.9px;letter-spacing:0.999px">localhost:8086 - total</div>
<div class="lgm" style="left:305.5px;top:494.6px;background:#f2cb30"></div>
<div class="lgt" style="left:345.5px;top:485.9px;letter-spacing:0.885px">localhost:8086 - failed</div>
</div>
<div class="panel" style="left:1928px;top:1258px;width:1885px;height:532.8px">
<div class="ptitle" style="left:15.5px;top:12.8px;letter-spacing:0.697px">Schedules</div>
<svg class="ic" style="left:174.1px;top:16.3px" width="26" height="26" viewBox="0 0 26 26"><circle cx="13" cy="13" r="10.8" fill="none" stroke="#8e8f9b" stroke-width="2.1"/><circle cx="13" cy="9.5" r="1.35" fill="#8e8f9b"/><rect x="11.9" y="12.3" width="2.2" height="6.2" rx="1.1" fill="#8e8f9b"/></svg>
<svg class="chart" width="1885" height="532.8" viewBox="0 0 1885 532.8"><defs><clipPath id="cp7"><rect x="125.5" y="84.0" width="1729.5" height="356.0"/></clipPath></defs><path d="M126.50,88.0V444.0M414.50,88.0V444.0M702.50,88.0V444.0M990.50,88.0V444.0M1278.50,88.0V444.0M1566.50,88.0V444.0M126.0,136.50H1853.0M126.0,196.50H1853.0M126.0,256.50H1853.0M126.0,316.50H1853.0M126.0,377.50H1853.0M126.0,437.50H1853.0" stroke="rgba(240,250,255,0.09)" stroke-width="1" fill="none" shape-rendering="crispEdges"/><g clip-path="url(#cp7)"><path d="M68.90,108.15C107.30,208.12 145.70,408.05 184.10,408.05C222.50,408.05 260.90,124.50 299.30,124.50C337.70,124.50 376.10,212.07 414.50,246.38C452.90,280.69 491.30,335.45 529.70,335.45C568.10,335.45 606.50,132.55 644.90,132.55C683.30,132.55 721.70,353.96 760.10,353.96C798.50,353.96 836.90,268.55 875.30,240.37C913.70,212.19 952.10,173.06 990.50,173.06C1028.90,173.06 1067.30,335.45 1105.70,335.45C1144.10,335.45 1182.50,198.30 1220.90,198.30C1259.30,198.30 1297.70,217.88 1336.10,237.97C1374.50,258.06 1412.90,363.46 1451.30,363.46C1489.70,363.46 1528.10,287.19 1566.50,269.22C1604.90,251.25 1643.30,231.48 1681.70,231.48C1720.10,231.48 1758.50,286.53 1796.90,314.05L1796.90,437.50L68.90,437.50Z" fill="#6eb868" fill-opacity="0.2"/><path d="M68.90,108.15C107.30,208.12 145.70,408.05 184.10,408.05C222.50,408.05 260.90,124.50 299.30,124.50C337.70,124.50 376.10,212.07 414.50,246.38C452.90,280.69 491.30,335.45 529.70,335.45C568.10,335.45 606.50,132.55 644.90,132.55C683.30,132.55 721.70,353.96 760.10,353.96C798.50,353.96 836.90,268.55 875.30,240.37C913.70,212.19 952.10,173.06 990.50,173.06C1028.90,173.06 1067.30,335.45 1105.70,335.45C1144.10,335.45 1182.50,198.30 1220.90,198.30C1259.30,198.30 1297.70,217.88 1336.10,237.97C1374.50,258.06 1412.90,363.46 1451.30,363.46C1489.70,363.46 1528.10,287.19 1566.50,269.22C1604.90,251.25 1643.30,231.48 1681.70,231.48C1720.10,231.48 1758.50,286.53 1796.90,314.05" fill="none" stroke="#6eb868" stroke-width="3.4" stroke-linejoin="round"/><path d="M68.90,437.50C107.30,437.50 145.70,437.50 184.10,437.50C222.50,437.50 260.90,437.50 299.30,437.50C337.70,437.50 376.10,437.50 414.50,437.50C452.90,437.50 491.30,437.50 529.70,437.50C568.10,437.50 606.50,437.50 644.90,437.50C683.30,437.50 721.70,437.50 760.10,437.50C798.50,437.50 836.90,437.50 875.30,437.50C913.70,437.50 952.10,437.50 990.50,437.50C1028.90,437.50 1067.30,437.50 1105.70,437.50C1144.10,437.50 1182.50,437.50 1220.90,437.50C1259.30,437.50 1297.70,437.50 1336.10,437.50C1374.50,437.50 1412.90,437.50 1451.30,437.50C1489.70,437.50 1528.10,437.50 1566.50,437.50C1604.90,437.50 1643.30,437.50 1681.70,437.50C1720.10,437.50 1758.50,437.50 1796.90,437.50" fill="none" stroke="#f2cb30" stroke-width="3.4" stroke-linejoin="round"/></g><text class="tk" x="115.5" y="143.4" text-anchor="end" textLength="96" lengthAdjust="spacing">2.5 ops/s</text><text class="tk" x="115.5" y="203.4" text-anchor="end" textLength="76" lengthAdjust="spacing">2 ops/s</text><text class="tk" x="115.5" y="263.4" text-anchor="end" textLength="92.5" lengthAdjust="spacing">1.5 ops/s</text><text class="tk" x="115.5" y="323.4" text-anchor="end" textLength="73.5" lengthAdjust="spacing">1 ops/s</text><text class="tk" x="115.5" y="383.9" text-anchor="end" textLength="96" lengthAdjust="spacing">0.5 ops/s</text><text class="tk" x="115.5" y="443.9" text-anchor="end" textLength="77.5" lengthAdjust="spacing">0 ops/s</text><text class="tk" x="126.0" y="471.5" text-anchor="middle" textLength="54" lengthAdjust="spacing">14:15</text><text class="tk" x="414.0" y="471.5" text-anchor="middle" textLength="57.5" lengthAdjust="spacing">14:20</text><text class="tk" x="702.0" y="471.5" text-anchor="middle" textLength="56.5" lengthAdjust="spacing">14:25</text><text class="tk" x="990.0" y="471.5" text-anchor="middle" textLength="58" lengthAdjust="spacing">14:30</text><text class="tk" x="1278.0" y="471.5" text-anchor="middle" textLength="57" lengthAdjust="spacing">14:35</text><text class="tk" x="1566.0" y="471.5" text-anchor="middle" textLength="57.5" lengthAdjust="spacing">14:40</text></svg>
<div class="lgm" style="left:22px;top:494.6px;background:#6eb868"></div>
<div class="lgt" style="left:62px;top:485.9px;letter-spacing:0.999px">localhost:8086 - total</div>
<div class="lgm" style="left:305.5px;top:494.6px;background:#f2cb30"></div>
<div class="lgt" style="left:345.5px;top:485.9px;letter-spacing:0.885px">localhost:8086 - failed</div>
</div>
<svg class="abs" style="left:46px;top:663px" width="18" height="16" viewBox="0 0 18 16"><path d="M3.4,5.8 L8.6,10.6 L13.8,5.8" fill="none" stroke="#ccccdc" stroke-width="2.4" stroke-linecap="round" stroke-linejoin="round"/></svg><div class="row" style="left:69px;top:650px;letter-spacing:0.853px">Task scheduler</div>
<svg class="abs" style="left:46px;top:1826px" width="18" height="16" viewBox="0 0 18 16"><path d="M3.4,5.8 L8.6,10.6 L13.8,5.8" fill="none" stroke="#ccccdc" stroke-width="2.4" stroke-linecap="round" stroke-linejoin="round"/></svg><div class="row" style="left:69px;top:1813px;letter-spacing:-1.531px">Go</div>
<div class="abs" style="left:0;top:0;width:3840px;height:75px;background:#171a1d;border-bottom:1.6px solid #2a2c31;box-shadow:0 4px 7px rgba(0,0,0,0.55)"></div>
<svg class="abs" style="left:30.0px;top:24.0px" width="42" height="28" viewBox="0 0 42 28"><path d="M4.6,5.4H37M4.6,13.9H37M4.6,22.4H37" stroke="#ccccdc" stroke-width="3.2" stroke-linecap="round" fill="none"/></svg>
<div class="abs" style="left:101px;top:21px;font-size:26px;line-height:32px;white-space:pre;color:#ccccdc;-webkit-text-stroke:0.35px #ccccdc;letter-spacing:0.347px;">Home</div>
<svg class="abs" style="left:185.8px;top:29.0px" width="16" height="20" viewBox="0 0 16 20"><path d="M5.4,5.6 L10.6,10 L5.4,14.4" fill="none" stroke="#8e8f9b" stroke-width="2.2" stroke-linecap="round" stroke-linejoin="round"/></svg>
<div class="abs" style="left:215.5px;top:21px;font-size:26px;line-height:32px;white-space:pre;color:#ccccdc;-webkit-text-stroke:0.35px #ccccdc;letter-spacing:0.477px;">Dashboards</div>
<svg class="abs" style="left:374.5px;top:29.0px" width="16" height="20" viewBox="0 0 16 20"><path d="M5.4,5.6 L10.6,10 L5.4,14.4" fill="none" stroke="#8e8f9b" stroke-width="2.2" stroke-linecap="round" stroke-linejoin="round"/></svg>
<div class="abs" style="left:405px;top:21px;font-size:26px;line-height:32px;white-space:pre;color:#ccccdc;-webkit-text-stroke:0.35px #ccccdc;letter-spacing:0.675px;">Integration - InfluxDB</div>
<svg class="abs" style="left:677.5px;top:29.0px" width="16" height="20" viewBox="0 0 16 20"><path d="M5.4,5.6 L10.6,10 L5.4,14.4" fill="none" stroke="#8e8f9b" stroke-width="2.2" stroke-linecap="round" stroke-linejoin="round"/></svg>
<div class="abs" style="left:707.6px;top:21px;font-size:26px;line-height:32px;white-space:pre;color:#a4a4b3;-webkit-text-stroke:0.35px #a4a4b3;letter-spacing:0.610px;">InfluxDB instance overview</div>
<svg class="abs" style="left:1066.2px;top:24.0px" width="30" height="30" viewBox="0 0 30 30"><path d="M15.00,2.35 L19.06,9.82 L27.41,11.37 L21.56,17.53 L22.67,25.96 L15.00,22.30 L7.33,25.96 L8.44,17.53 L2.59,11.37 L10.94,9.82 Z" fill="none" stroke="#ccccdc" stroke-width="2.7" stroke-linejoin="round"/></svg>
<svg class="abs" style="left:1127.0px;top:23.0px" width="30" height="30" viewBox="0 0 30 30"><g fill="none" stroke="#ccccdc" stroke-width="2.7"><circle cx="23.5" cy="6.8" r="4"/><circle cx="7.2" cy="15.5" r="4"/><circle cx="23.5" cy="23.4" r="4"/><path d="M10.8,13.6 L19.9,8.7 M10.8,17.4 L19.9,21.5" stroke-width="2.5"/></g></svg>
<svg class="abs" style="left:2396.0px;top:28.0px" width="34" height="20" viewBox="0 0 34 20"><g fill="#6e9fff"><rect x="0.8" y="8.8" width="4.6" height="10.4" rx="1"/><rect x="6.8" y="3.8" width="4.6" height="15.4" rx="1"/><rect x="12.8" y="9.3" width="4.6" height="9.9" rx="1"/><rect x="18.4" y="1.3" width="4.6" height="17.9" rx="1"/></g><path d="M27.4,5V15.6M22.1,10.3H32.7" stroke="#ff9830" stroke-width="3.6" fill="none"/></svg>
<div class="abs" style="left:2439.5px;top:21.5px;font-size:26px;line-height:32px;white-space:pre;color:#6e9fff;-webkit-text-stroke:0.35px #6e9fff;letter-spacing:0.717px;-webkit-text-stroke:0.95px #6e9fff">Add</div>
<svg class="abs" style="left:2494.2px;top:30.6px" width="20" height="16" viewBox="0 0 20 16"><path d="M4.6,5.2 L10,11 L15.4,5.2" fill="none" stroke="#6e9fff" stroke-width="2.5" stroke-linecap="round" stroke-linejoin="round"/></svg>
<svg class="abs" style="left:2563.0px;top:26.0px" width="24" height="24" viewBox="0 0 24 24"><g fill="none" stroke="#8e8f9b" stroke-width="2.8" stroke-linejoin="round"><path d="M1.4,4.4 Q1.4,1.4 4.4,1.4 H15.2 L22.6,8.8 V19.6 Q22.6,22.6 19.6,22.6 H4.4 Q1.4,22.6 1.4,19.6 Z"/><path d="M7.5,1.6 V5.1 H14.1 V1.6"/><path d="M7.1,22.4 V17 Q7.1,14.8 9.3,14.8 H15.1 Q17.3,14.8 17.3,17 V22.4"/></g></svg>
<svg class="abs" style="left:2638.3px;top:24.4px" width="28" height="28" viewBox="0 0 28 28"><circle cx="14" cy="14" r="12.05" fill="none" stroke="#8e8f9b" stroke-width="2.8"/><circle cx="14" cy="9.5" r="1.65" fill="#8e8f9b"/><rect x="12.7" y="13.4" width="2.6" height="6.4" rx="1.3" fill="#8e8f9b"/></svg>
<svg class="abs" style="left:2716.0px;top:24.0px" width="28" height="28" viewBox="0 0 28 28"><path d="M11.68,1.92L16.32,1.92L17.31,5.20L17.88,5.44L20.90,3.82L24.18,7.10L22.56,10.12L22.80,10.69L26.08,11.68L26.08,16.32L22.80,17.31L22.56,17.88L24.18,20.90L20.90,24.18L17.88,22.56L17.31,22.80L16.32,26.08L11.68,26.08L10.69,22.80L10.12,22.56L7.10,24.18L3.82,20.90L5.44,17.88L5.20,17.31L1.92,16.32L1.92,11.68L5.20,10.69L5.44,10.12L3.82,7.10L7.10,3.82L10.12,5.44L10.69,5.20Z" fill="none" stroke="#8e8f9b" stroke-width="2.8" stroke-linejoin="round"/><circle cx="14" cy="14" r="3.7" fill="none" stroke="#8e8f9b" stroke-width="2.8"/></svg>
<svg class="abs" style="left:2792.4px;top:28.5px" width="16" height="20" viewBox="0 0 16 20"><path d="M11.1,4.4 L4.9,10 L11.1,15.6" fill="none" stroke="#8e8f9b" stroke-width="2.3" stroke-linecap="round" stroke-linejoin="round"/></svg>
<svg class="abs" style="left:2841.3px;top:24.3px" width="28" height="28" viewBox="0 0 28 28"><circle cx="14" cy="14" r="12.0" fill="none" stroke="#8e8f9b" stroke-width="2.8"/><path d="M14,7.2 V14.4 H8.8" fill="none" stroke="#8e8f9b" stroke-width="2.8" stroke-linecap="round" stroke-linejoin="round"/></svg>
<div class="abs" style="left:2886.7px;top:21.5px;font-size:26px;line-height:32px;white-space:pre;color:#a0a0ae;-webkit-text-stroke:0.35px #a0a0ae;letter-spacing:0.943px;-webkit-text-stroke:0.9px #a0a0ae">2023-11-20 14:15:00 to 2023-11-20 14:44:59</div>
<svg class="abs" style="left:3464.2px;top:31.2px" width="20" height="16" viewBox="0 0 20 16"><path d="M4.6,5.2 L10,11 L15.4,5.2" fill="none" stroke="#8e8f9b" stroke-width="2.2" stroke-linecap="round" stroke-linejoin="round"/></svg>
<svg class="abs" style="left:3519.0px;top:28.5px" width="16" height="20" viewBox="0 0 16 20"><path d="M4.9,4.4 L11.1,10 L4.9,15.6" fill="none" stroke="#8e8f9b" stroke-width="2.3" stroke-linecap="round" stroke-linejoin="round"/></svg>
<svg class="abs" style="left:3568.0px;top:24.0px" width="30" height="30" viewBox="0 0 30 30"><g fill="none" stroke="#8e8f9b" stroke-width="2.8" stroke-linecap="round"><circle cx="12.2" cy="12.2" r="10.2"/><path d="M19.6,19.6 L26.4,26.4 M7.6,12.2 H16.8"/></g></svg>
<svg class="abs" style="left:3646.0px;top:24.0px" width="30" height="30" viewBox="0 0 30 30"><g fill="none" stroke="#8e8f9b" stroke-width="2.8" stroke-linecap="round" stroke-linejoin="round"><path d="M25.2,12.6 A10.6,10.6 0 0 0 6.2,7.4 M3.6,2.4 V8.4 H9.8"/><path d="M2.8,15.4 A10.6,10.6 0 0 0 21.8,20.6 M24.4,25.6 V19.6 H18.2"/></g></svg>
<svg class="abs" style="left:3710.2px;top:31.2px" width="20" height="16" viewBox="0 0 20 16"><path d="M4.6,5.2 L10,11 L15.4,5.2" fill="none" stroke="#8e8f9b" stroke-width="2.2" stroke-linecap="round" stroke-linejoin="round"/></svg>
<div class="abs" style="left:3757.4px;top:16px;width:1.8px;height:50.6px;background:#303237"></div>
<svg class="abs" style="left:3783.0px;top:30.0px" width="26" height="22" viewBox="0 0 26 22"><path d="M4.6,15.4 L12.7,6.6 L20.8,15.4" fill="none" stroke="#ccccdc" stroke-width="3.6" stroke-linecap="round" stroke-linejoin="round"/></svg>
<div class="abs" style="left:3826px;top:757.5px;width:14px;height:694.5px;border-radius:7px;background:#2f3035"></div>
<div class="abs" style="left:0;top:0;width:3840px;height:1866px;border:2px solid rgba(255,255,255,0.19);border-top-width:1.5px;border-radius:0 0 22px 22px;pointer-events:none;box-shadow:0 0 0 30px #0b0f1a"></div>
</div></body></html>
